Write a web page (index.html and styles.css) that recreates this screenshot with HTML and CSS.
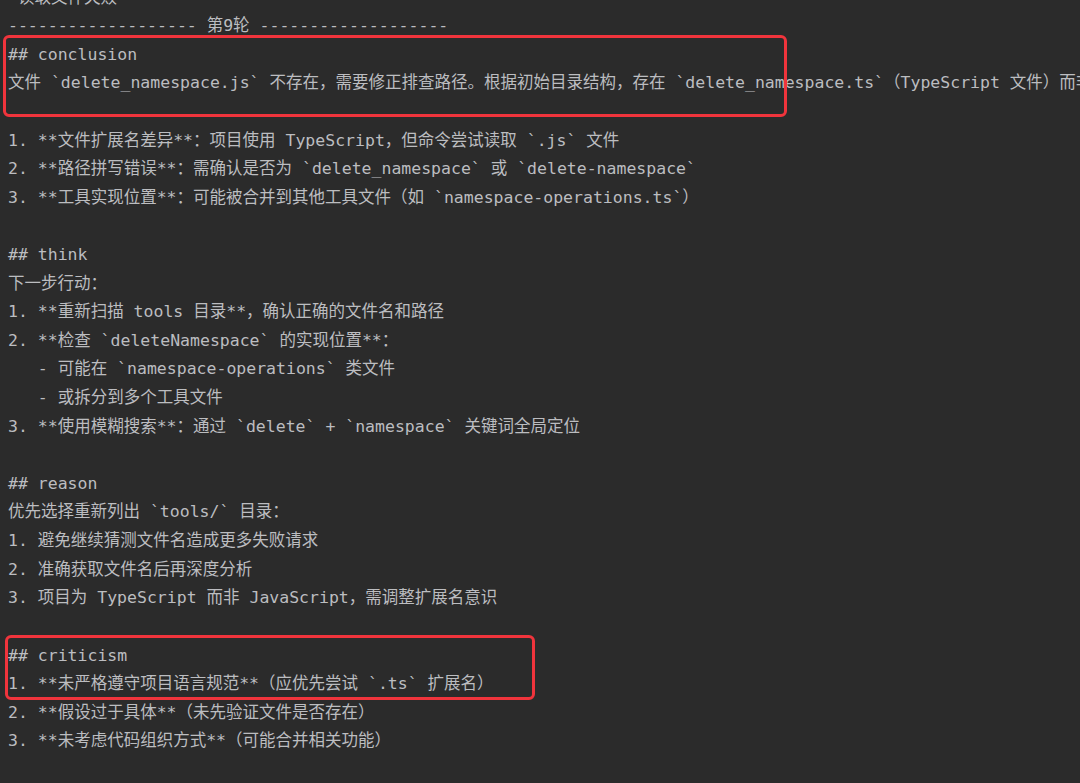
FILE: index.html
```
<!DOCTYPE html>
<html lang="zh-CN">
<head>
<meta charset="utf-8">
<title>console output</title>
<link rel="stylesheet" href="styles.css">
</head>
<body>
<main class="console">
  <div class="log">
    <div class="line"> 读取文件失败</div>
    <div class="line">------------------- 第9轮 -------------------</div>
    <div class="line">## conclusion</div>
    <div class="line">文件 `delete_namespace.js` 不存在，需要修正排查路径。根据初始目录结构，存在 `delete_namespace.ts`（TypeScript 文件）而非 `delete_namespace.js`。可能原因：</div>
    <div class="line blank"></div>
    <div class="line">1. **文件扩展名差异**：项目使用 TypeScript，但命令尝试读取 `.js` 文件</div>
    <div class="line">2. **路径拼写错误**：需确认是否为 `delete_namespace` 或 `delete-namespace`</div>
    <div class="line">3. **工具实现位置**：可能被合并到其他工具文件（如 `namespace-operations.ts`）</div>
    <div class="line blank"></div>
    <div class="line">## think</div>
    <div class="line">下一步行动：</div>
    <div class="line">1. **重新扫描 tools 目录**，确认正确的文件名和路径</div>
    <div class="line">2. **检查 `deleteNamespace` 的实现位置**：</div>
    <div class="line">   - 可能在 `namespace-operations` 类文件</div>
    <div class="line">   - 或拆分到多个工具文件</div>
    <div class="line">3. **使用模糊搜索**：通过 `delete` + `namespace` 关键词全局定位</div>
    <div class="line blank"></div>
    <div class="line">## reason</div>
    <div class="line">优先选择重新列出 `tools/` 目录：</div>
    <div class="line">1. 避免继续猜测文件名造成更多失败请求</div>
    <div class="line">2. 准确获取文件名后再深度分析</div>
    <div class="line">3. 项目为 TypeScript 而非 JavaScript，需调整扩展名意识</div>
    <div class="line blank"></div>
    <div class="line">## criticism</div>
    <div class="line">1. **未严格遵守项目语言规范**（应优先尝试 `.ts` 扩展名）</div>
    <div class="line">2. **假设过于具体**（未先验证文件是否存在）</div>
    <div class="line">3. **未考虑代码组织方式**（可能合并相关功能）</div>
    <div class="line blank"></div>
  </div>
  <div class="mark mark-conclusion"></div>
  <div class="mark mark-criticism"></div>
</main>
</body>
</html>
```
FILE: styles.css
```
html, body {
  margin: 0;
  padding: 0;
  background: #2b2b2b;
}

.console {
  position: relative;
  width: 1080px;
  height: 783px;
  overflow: hidden;
  background: #2b2b2b;
}

.log {
  display: flex;
  flex-direction: column;
  margin-top: -16.5px;
  padding: 0 8px;
  font-family: "DejaVu Sans Mono", "Liberation Mono", "Noto Sans CJK SC", monospace;
  font-size: 16.5px;
  line-height: 28.62px;
  color: #bcbdc0;
}

.line {
  white-space: pre;
  height: 28.62px;
}

.mark {
  position: absolute;
  box-sizing: border-box;
  border: 3px solid #f0343c;
  border-radius: 6px;
}

.mark-conclusion {
  left: 3px;
  top: 35px;
  width: 784px;
  height: 82px;
}

.mark-criticism {
  left: 5px;
  top: 635px;
  width: 530px;
  height: 65px;
}
```
